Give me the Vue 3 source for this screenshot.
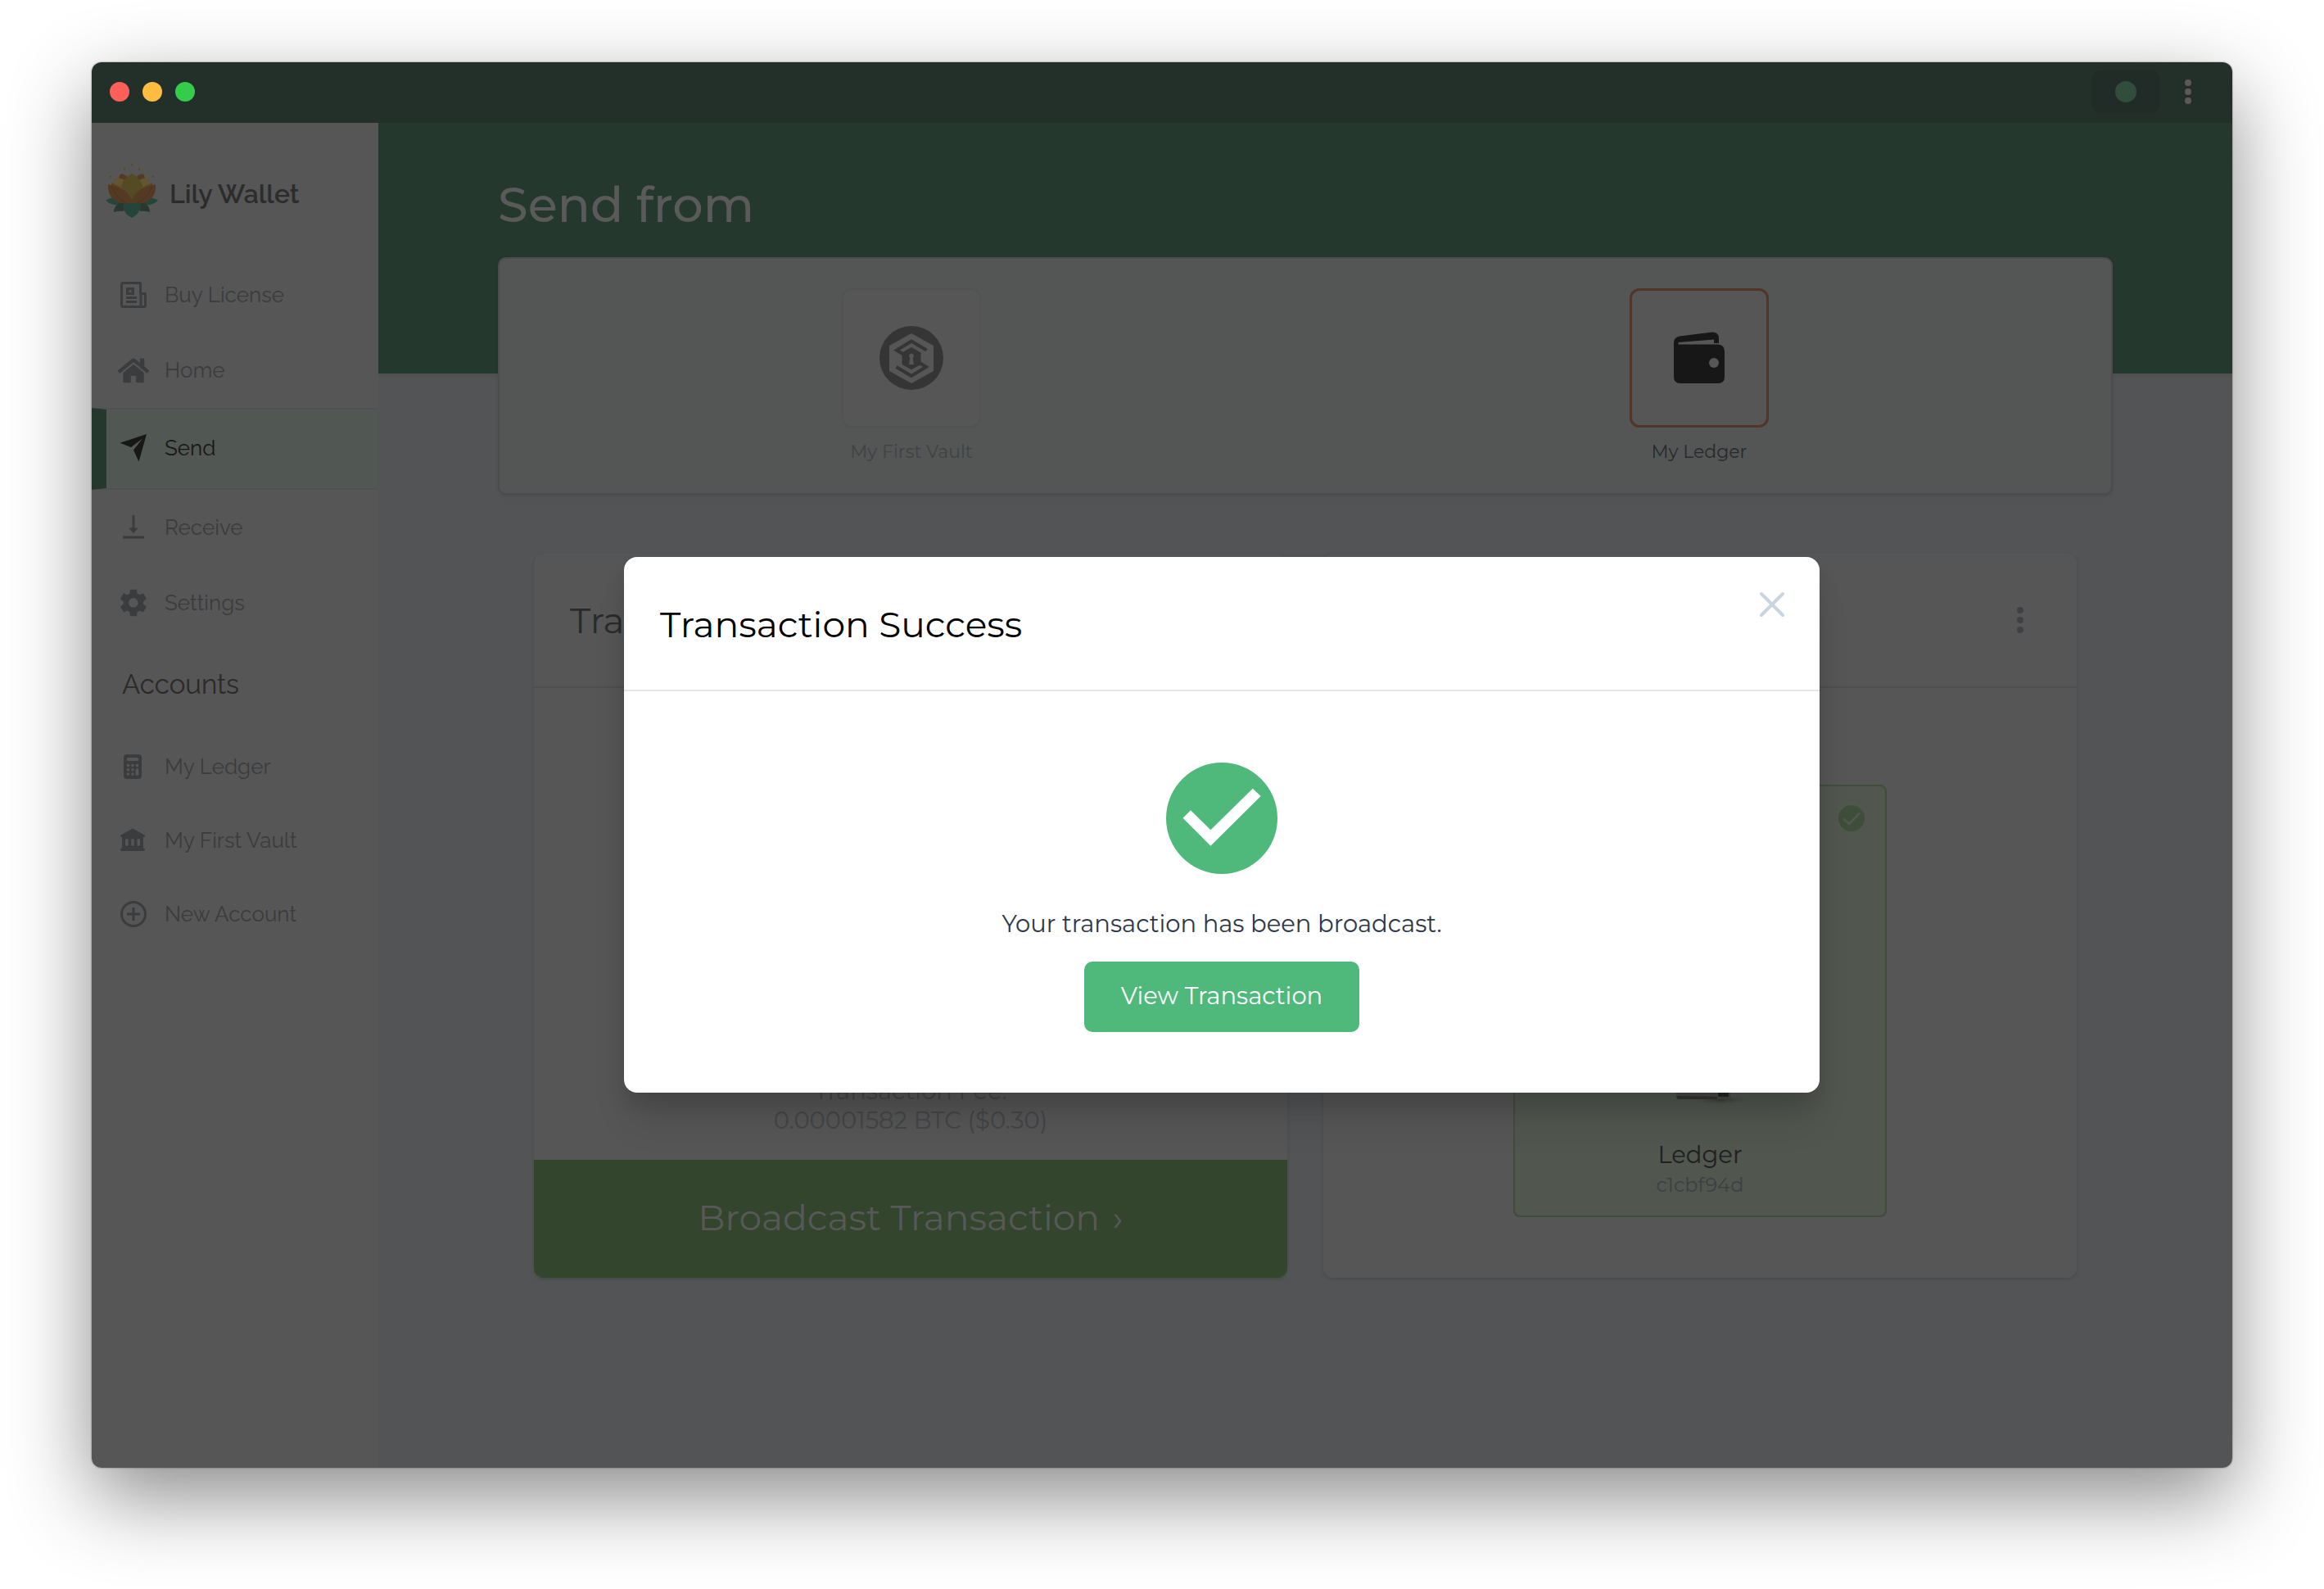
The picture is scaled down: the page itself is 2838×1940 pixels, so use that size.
<script setup>
const menu = [
  { icon: 'news', label: 'Buy License' },
  { icon: 'home', label: 'Home' },
  { icon: 'send', label: 'Send', active: true },
  { icon: 'receive', label: 'Receive' },
  { icon: 'settings', label: 'Settings' },
]
const accounts = [
  { icon: 'calculator', label: 'My Ledger' },
  { icon: 'bank', label: 'My First Vault' },
  { icon: 'plus', label: 'New Account' },
]
const icons = {
  news: '<path fill="none" stroke="currentColor" stroke-width="3" stroke-linejoin="round" d="M28.500 5.500H7.500a2 2 0 0 0-2 2V32.500a2 2 0 0 0 2 2h26v0a2 2 0 0 0 1-2V18.500h-6zM29 18v16"/><path fill="none" stroke="currentColor" stroke-width="3" d="M11 23.500h13M11 28.500h13"/><path d="M11 11h10v9H11zm3.500 3v3h3v-3z" fill-rule="evenodd"/>',
  home: '<path transform="translate(1 3.500) scale(.066)" d="M280.370 148.260L96 300.110V464a16 16 0 0 0 16 16l112.060-.29a16 16 0 0 0 15.920-16V368a16 16 0 0 1 16-16h64a16 16 0 0 1 16 16v95.640a16 16 0 0 0 16 16.050L464 480a16 16 0 0 0 16-16V300L295.670 148.260a12.190 12.190 0 0 0-15.300 0zM571.600 251.470L488 182.560V44.050a12 12 0 0 0-12-12h-56a12 12 0 0 0-12 12v72.610L318.470 43a48 48 0 0 0-61 0L4.340 251.470a12 12 0 0 0-1.600 16.900l25.500 31A12 12 0 0 0 45.150 301l235.220-193.740a12.190 12.190 0 0 1 15.300 0L530.900 301a12 12 0 0 0 16.900-1.600l25.500-31a12 12 0 0 0-1.700-16.930z"/>',
  send: '<path d="M36 3L3.500 13.700L17 19L31 8.500L20 22.500L26.500 36.500Z"/>',
  receive: '<path d="M18.500 5h3v15.500H26L20 27l-6-6.500h4.500zM7 30.500h26v3H7z"/>',
  settings: '<path transform="translate(.5 .5) scale(1.620)" d="M19.430 12.980c.04-.32.07-.64.07-.98s-.03-.66-.07-.98l2.110-1.650c.19-.15.24-.42.12-.64l-2-3.460c-.12-.22-.39-.3-.61-.22l-2.490 1c-.52-.4-1.080-.73-1.690-.98l-.38-2.650C14.460 2.180 14.250 2 14 2h-4c-.25 0-.46.18-.49.42l-.38 2.650c-.61.25-1.170.59-1.690.98l-2.490-1c-.23-.09-.49 0-.61.22l-2 3.460c-.13.22-.07.49.12.64l2.110 1.650c-.04.32-.07.65-.07.98s.03.66.07.98l-2.110 1.650c-.19.15-.24.42-.12.64l2 3.460c.12.22.39.3.61.22l2.490-1c.52.4 1.080.73 1.690.98l.38 2.650c.03.24.24.42.49.42h4c.25 0 .46-.18.49-.42l.38-2.650c.61-.25 1.170-.59 1.690-.98l2.490 1c.23.09.49 0 .61-.22l2-3.460c.12-.22.07-.49-.12-.64l-2.110-1.650zM12 15.500c-1.930 0-3.500-1.570-3.500-3.500s1.570-3.500 3.500-3.500 3.500 1.570 3.500 3.500-1.570 3.500-3.500 3.500z"/>',
  calculator: '<rect x="8" y="5" width="22" height="30" rx="4"/><g fill="#565656"><rect x="12" y="9" width="14" height="4" rx="1.500"/><circle cx="13.500" cy="18.500" r="1.800"/><circle cx="19" cy="18.500" r="1.800"/><circle cx="24.500" cy="18.500" r="1.800"/><circle cx="13.500" cy="23.700" r="1.800"/><circle cx="19" cy="23.700" r="1.800"/><circle cx="13.500" cy="29" r="1.800"/><circle cx="19" cy="29" r="1.800"/><rect x="22.700" y="22" width="3.600" height="9" rx="1.800"/></g>',
  bank: '<path fill-rule="evenodd" d="M19 5.500L32.500 13a1.500 1.500 0 0 1 0 3H32v13.500h.5a1.800 1.800 0 0 1 0 3.500h-27a1.800 1.800 0 0 1 0-3.500H6V16h-.5a1.500 1.500 0 0 1 0-3zM11.800 18a1.800 1.800 0 0 0-1.800 1.800v5.400a1.800 1.800 0 0 0 3.600 0v-5.400A1.800 1.800 0 0 0 11.800 18zM19 18a1.800 1.800 0 0 0-1.800 1.800v5.400a1.800 1.800 0 0 0 3.600 0v-5.400A1.800 1.800 0 0 0 19 18zM26.200 18a1.800 1.800 0 0 0-1.800 1.800v5.400a1.800 1.800 0 0 0 3.600 0v-5.400A1.800 1.800 0 0 0 26.200 18z"/>',
  plus: '<g fill="none" stroke="currentColor" stroke-width="3"><circle cx="20" cy="20" r="14.500"/><path d="M20 12v16M12 20h16"/></g>',
}
</script>

<template>
  <div class="desktop">
    <div class="window">
      <header class="titlebar">
        <div class="lights">
          <button class="light red" aria-label="Close"></button>
          <button class="light yellow" aria-label="Minimize"></button>
          <button class="light green" aria-label="Zoom"></button>
        </div>
        <div class="title-actions">
          <button class="status" aria-label="Connection status"><span></span></button>
          <button class="dots" aria-label="Menu">
            <svg viewBox="0 0 10 32" width="10" height="32" fill="currentColor"><circle cx="5" cy="5" r="4"/><circle cx="5" cy="16" r="4"/><circle cx="5" cy="27" r="4"/></svg>
          </button>
        </div>
      </header>

      <div class="body">
        <aside class="sidebar">
          <div class="brand">
            <svg class="logo" viewBox="0 0 66 67" width="66" height="67">
              <g fill="#5a4a24"><circle cx="33" cy="2" r="1.200"/><circle cx="24" cy="7.500" r="1.200"/><circle cx="42" cy="7.500" r="1.200"/><circle cx="7" cy="16.500" r="1.200"/><circle cx="59" cy="16.500" r="1.200"/></g>
              <path fill="#24463a" d="M1 45.500Q8 41 16 43L24 50Q9 54 1 45.500zM65 45.500Q58 41 50 43L42 50Q57 54 65 45.500z"/>
              <path fill="#2a382f" d="M11 60Q11 52 18 49H25Q26 56 22 59Q17 58 11 60zM55 60Q55 52 48 49H41Q40 56 44 59Q49 58 55 60z"/>
              <path fill="#24463a" d="M23 49H43Q46 60 33 67Q20 60 23 49z"/>
              <path fill="#553a24" d="M20 13Q26 14 30 20L24 30L17 20Q17 15 20 13zM46 13Q40 14 36 20L42 30L49 20Q49 15 46 13z"/>
              <path fill="#62552f" d="M12 19Q18 17 24 21V36L16 33Q11 27 12 19zM54 19Q48 17 42 21V36L50 33Q55 27 54 19z"/>
              <path fill="#544a24" d="M33 13Q42 17 46 28L44 36L33 48L22 36L20 28Q24 17 33 13z"/>
              <path fill="#5a4426" d="M8 24Q30 33 33 48Q36 33 58 24Q59 38 50 44L40 49H26L16 44Q7 38 8 24z"/>
              <path fill="#553a23" d="M4 26Q29 31 33 46Q37 31 62 26Q63 39 55 45Q50 49 42 49H24Q16 49 11 45Q3 39 4 26z"/>
              <path fill="none" stroke="#49331f" stroke-width="1" d="M8 27Q13 43 26 49M58 27Q53 43 40 49"/>
            </svg>
            <span>Lily Wallet</span>
          </div>
          <nav class="menu">
            <a v-for="m in menu" :key="m.label" href="#" class="item" :class="{ active: m.active }">
              <svg viewBox="0 0 40 40" width="40" height="40" fill="currentColor" v-html="icons[m.icon]"></svg>
              <span>{{ m.label }}</span>
            </a>
          </nav>
          <h3>Accounts</h3>
          <nav class="menu accounts">
            <a v-for="m in accounts" :key="m.label" href="#" class="item">
              <svg viewBox="0 0 40 40" width="40" height="40" fill="currentColor" v-html="icons[m.icon]"></svg>
              <span>{{ m.label }}</span>
            </a>
          </nav>
        </aside>

        <main class="main">
          <h1>Send from</h1>
          <section class="picker">
            <button class="account">
              <span class="tile">
                <svg viewBox="0 0 78 78" width="78" height="78">
                  <circle cx="39" cy="39" r="39" fill="#353535"/>
                  <path fill="#565656" d="M39 9L66 24V55L39 70L12 55V24z"/>
                  <path fill="#353535" d="M39 26L50.500 32.500V47L39 53.500L27.500 47V32.500z"/>
                  <path fill="none" stroke="#353535" stroke-width="4" d="M29 34.500L21 29.500L39 18.500L57.500 29.500M49 45L57 50L39 61L20.500 50"/>
                  <path fill="#565656" d="M39 33.500a3.200 3.200 0 0 1 1.700 5.800L42 47h-6l1.300-7.700A3.200 3.200 0 0 1 39 33.500z"/>
                </svg>
              </span>
              <span class="name">My First Vault</span>
            </button>
            <button class="account selected">
              <span class="tile">
                <svg viewBox="0 0 64 66" width="64" height="66" fill="#171717">
                  <path d="M1 26V14Q1 8 8 6.500L48 1.500Q56 1.500 56 9V15H50V10.500L6.500 14V16.500H55Q63 17 63 25V56Q63 64 55 64H9Q1 64 1 56z"/>
                  <circle cx="50" cy="39" r="6" fill="#565656"/>
                </svg>
              </span>
              <span class="name">My Ledger</span>
            </button>
          </section>

          <div class="cards">
            <section class="card">
              <div class="card-head"><h2>Tra</h2></div>
              <div class="summary">
                <p>Transaction Fee:</p>
                <p>0.00001582 BTC ($0.30)</p>
              </div>
              <button class="broadcast">Broadcast Transaction <span>›</span></button>
            </section>
            <section class="card">
              <div class="card-head end">
                <button class="dots" aria-label="Options">
                  <svg viewBox="0 0 10 32" width="10" height="32" fill="currentColor"><circle cx="5" cy="4" r="4"/><circle cx="5" cy="16" r="4"/><circle cx="5" cy="28" r="4"/></svg>
                </button>
              </div>
              <div class="devices">
                <div class="device">
                  <svg class="signed" viewBox="0 0 32 32" width="32" height="32"><circle cx="16" cy="16" r="16" fill="#3f4e3a"/><path d="M6 16.500L13 23L26 9.500" fill="none" stroke="#51564f" stroke-width="3"/></svg>
                  <svg class="hardware" viewBox="0 0 120 300" width="120" height="300">
                    <defs><radialGradient id="ground"><stop offset="0" stop-color="#383c36"/><stop offset="1" stop-color="#4d524b" stop-opacity="0"/></radialGradient></defs>
                    <ellipse cx="84" cy="291" rx="36" ry="6" fill="url(#ground)"/>
                    <rect x="31" y="20" width="66" height="270" rx="3" fill="#474747"/>
                    <path d="M31 286l50 1v3H33z" fill="#333"/>
                    <rect x="82" y="270" width="13" height="17" fill="#222725"/>
                  </svg>
                  <strong>Ledger</strong>
                  <small>c1cbf94d</small>
                </div>
              </div>
            </section>
          </div>
        </main>
      </div>

      <div class="overlay">
        <div class="modal" role="dialog" aria-modal="true" aria-labelledby="modal-title">
          <div class="modal-head">
            <h2 id="modal-title">Transaction Success</h2>
            <button class="close" aria-label="Close dialog">
              <svg viewBox="0 0 32 32" width="32" height="32" fill="none" stroke="currentColor" stroke-width="4" stroke-linecap="round"><path d="M3 3l26 26M29 3L3 29"/></svg>
            </button>
          </div>
          <div class="modal-body">
            <svg viewBox="0 0 136 136" width="136" height="136"><circle cx="68" cy="68" r="68" fill="#4eb97b"/><path fill="#fff" d="M20.500 67.700L30 58.300L54.400 82.300L105.800 31.700L115.600 41L54.400 101.700z"/></svg>
            <p>Your transaction has been broadcast.</p>
            <button class="view">View Transaction</button>
          </div>
        </div>
      </div>
    </div>
  </div>
</template>

<style>
body { margin: 0; background: #fff; }
</style>

<style scoped>
* { box-sizing: border-box; }
button { padding: 0; border: 0; background: none; font: inherit; color: inherit; cursor: pointer; }
h1, h2, h3, p { margin: 0; font-weight: inherit; }
svg { display: block; flex: none; }
.desktop { min-height: 100vh; padding: 76px 112px 148px; display: flex; font-family: Montserrat, Inter, "Open Sans", sans-serif; }
.window {
  position: relative; flex: 1; display: flex; flex-direction: column;
  border-radius: 12px;
  box-shadow: 0 0 2px rgba(0, 0, 0, .5), 0 36px 100px rgba(0, 0, 0, .46);
}
.titlebar {
  height: 74px; padding: 0 49px 2px 22px; display: flex; align-items: center; justify-content: space-between;
  background: #23302a; border-radius: 12px 12px 0 0;
}
.lights { display: flex; gap: 16px; }
.light { width: 24px; height: 24px; border-radius: 50%; }
.red { background: #fe5f5b; }
.yellow { background: #febd41; }
.green { background: #35cb4b; }
.title-actions { display: flex; align-items: center; gap: 29px; color: #5a5a5a; }
.status { width: 84px; height: 52px; border-radius: 12px; background: #212b28; display: flex; align-items: center; justify-content: center; }
.status span { width: 26px; height: 26px; border-radius: 50%; background: #314d3b; }

.body { flex: 1; display: flex; }
.sidebar {
  width: 350px; padding-top: 44px; background: #565656; border-bottom-left-radius: 12px;
  font-family: Raleway, Lato, sans-serif;
}
.brand { height: 120px; padding-left: 16px; display: flex; gap: 13px; font-size: 32px; line-height: 40px; font-weight: 600; color: #2c2c2c; }
.brand .logo { margin-top: 5px; }
.brand span { margin-top: 23px; }
.item {
  height: 92px; padding-left: 31px; display: flex; align-items: center; gap: 18px;
  font-size: 26px; line-height: 36px; color: #3b3c3e; text-decoration: none;
}
.item.active {
  height: 100px; padding-left: 13px; padding-bottom: 2px; background: #515752; color: #171717;
  border: solid #4f5254; border-width: 2px 0; border-left: 18px solid #25382e;
}
.sidebar h3 { padding: 34px 0 35px 37px; font-size: 33px; line-height: 40px; color: #2a2a2a; }
.accounts .item { height: 90px; }

.main {
  flex: 1; padding: 64px 146px; border-bottom-right-radius: 12px;
  background: linear-gradient(#25382d 306px, #4f4f50 306px, #535456 312px);
}
h1 { font-size: 59px; line-height: 72px; font-weight: 500; color: #5a5a5a; }
.picker {
  margin-top: 28px; height: 290px; padding: 36px 22px; display: grid; grid-template-columns: 1fr 1fr;
  border: 2px solid #4b4c4e; border-radius: 10px; background: #545655;
  box-shadow: 0 2px 4px rgba(0, 0, 0, .1);
}
.account { display: flex; flex-direction: column; align-items: center; gap: 14px; color: #404245; }
.tile { width: 170px; height: 170px; display: flex; align-items: center; justify-content: center; border: 2px solid #515352; border-radius: 12px; background: #565656; }
.selected { color: #27292c; }
.selected .tile { border: 3px solid #513526; }
.name { font-size: 22px; line-height: 32px; }

.cards { margin: 72px 44px 0; display: grid; grid-template-columns: 1fr 1fr; gap: 44px; }
.card { height: 884px; display: flex; flex-direction: column; background: #565656; border-radius: 12px; box-shadow: 0 2px 4px rgba(0, 0, 0, .12); color: #2a2a2a; overflow: hidden; }
.card-head { height: 164px; padding: 0 64px 0 44px; display: flex; align-items: center; justify-content: space-between; border-bottom: 2px solid #4f4f50; }
.card-head.end { justify-content: flex-end; color: #3f4043; }
.card-head h2 { font-size: 44px; line-height: 56px; }
.summary { flex: 1; display: flex; flex-direction: column; justify-content: flex-end; padding-bottom: 30px; text-align: center; font-size: 29px; line-height: 36px; color: #434547; }
.broadcast { height: 144px; padding-bottom: 4px; background: #33452c; color: #585858; font-size: 44px; }
.broadcast span { margin-left: 4px; }
.devices { flex: 1; display: flex; justify-content: center; padding-top: 118px; }
.device {
  position: relative; width: 456px; height: 528px; padding-bottom: 20px; display: flex; flex-direction: column; align-items: center; justify-content: flex-end;
  border: 2px solid #3f4e3a; border-radius: 8px; background: #51564f;
}
.signed { position: absolute; top: 23px; right: 25px; }
.hardware { margin-bottom: 38px; }
.device strong { font-size: 29px; line-height: 40px; font-weight: 400; color: #202020; }
.device small { font-size: 24px; line-height: 34px; color: #3d4144; }

.overlay { position: absolute; inset: 0; padding: 146px 0 0 146px; display: flex; align-items: center; justify-content: center; }
.modal { width: 1460px; border-radius: 16px; background: #fff; box-shadow: 0 40px 50px -10px rgba(0, 0, 0, .12), 0 16px 24px rgba(0, 0, 0, .1); }
.modal-head { height: 164px; padding: 42px 42px 0 44px; display: flex; justify-content: space-between; align-items: flex-start; border-bottom: 2px solid #e5e6ea; }
.modal-head h2 { font-size: 44px; line-height: 80px; color: #000; }
.close { color: #cbd5e1; }
.modal-body { height: 490px; padding-top: 87px; display: flex; flex-direction: column; align-items: center; color: #2d3748; font-size: 29px; line-height: 44px; }
.modal-body p { margin: 39px 0 24px; }
.view { width: 336px; height: 86px; padding-bottom: 2px; border-radius: 10px; background: #4eb97b; color: #fff; }
</style>
